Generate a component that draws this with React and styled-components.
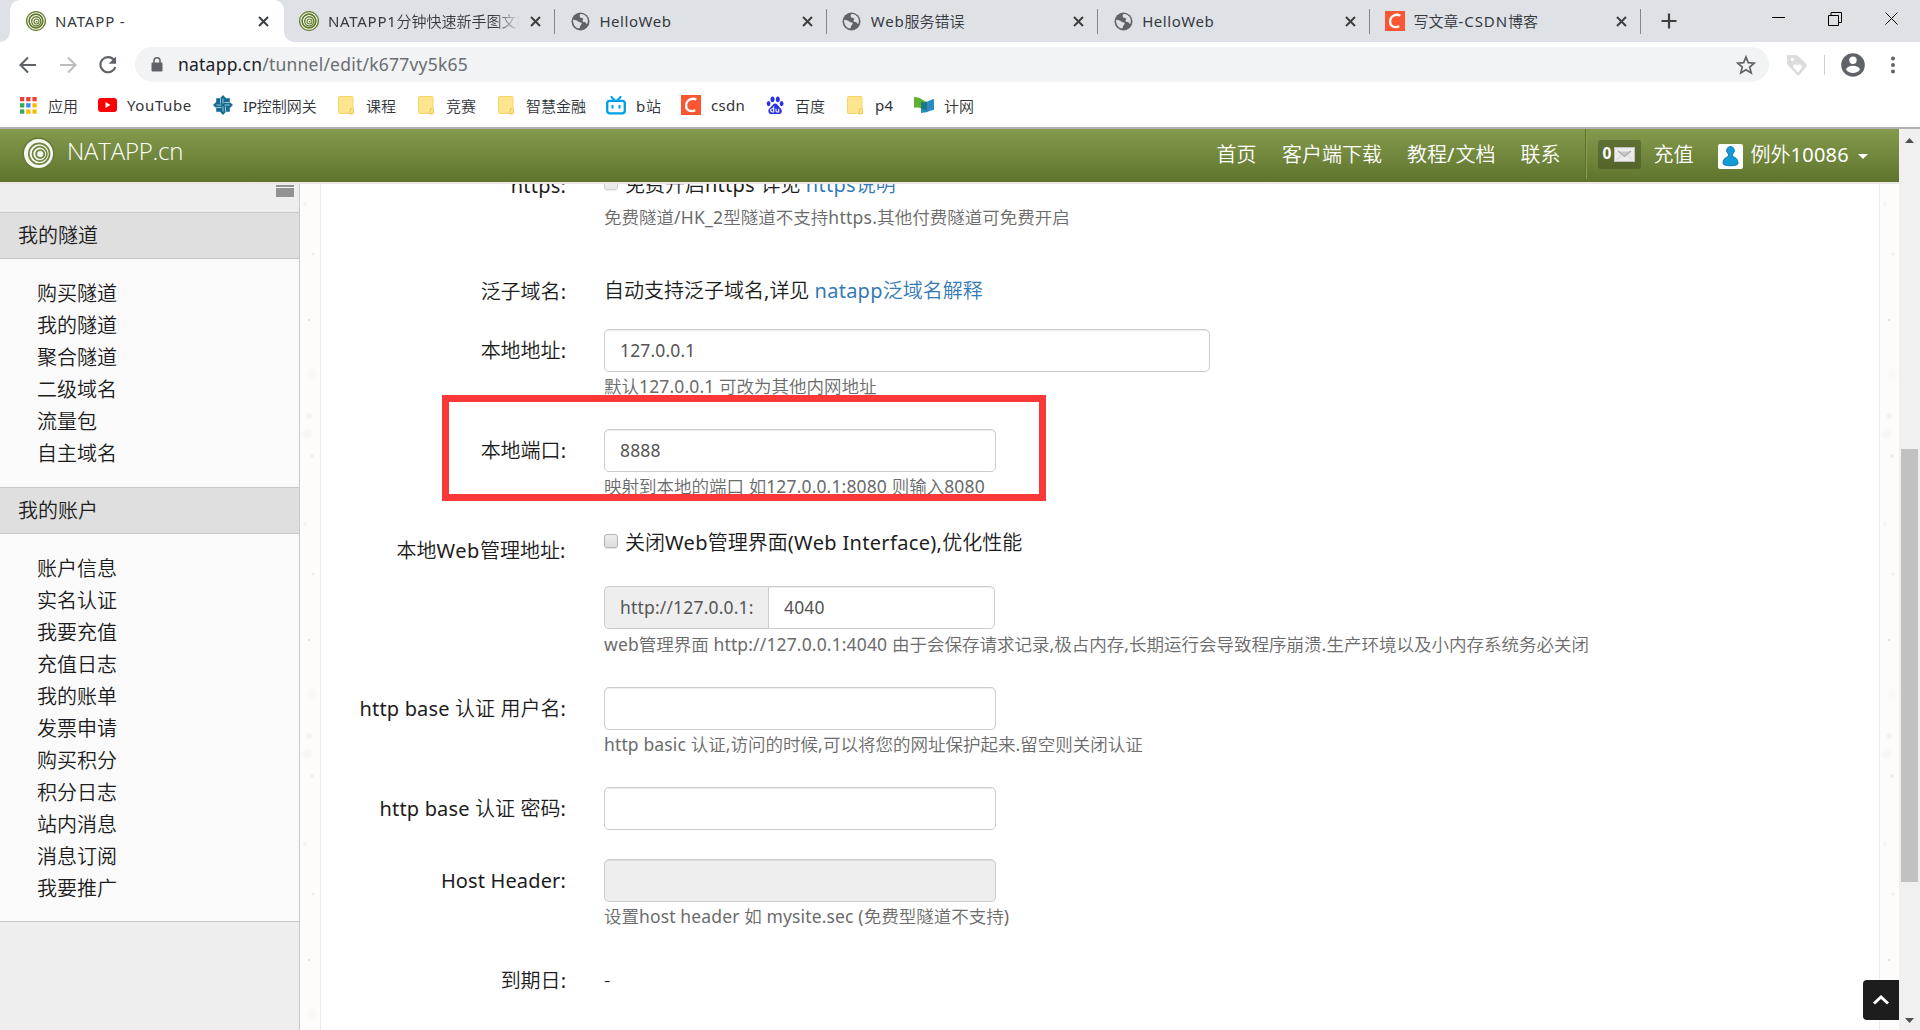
import React from "react";
import styled, { createGlobalStyle, css } from "styled-components";

const Global = createGlobalStyle`
  * { box-sizing: border-box; }
  body { margin: 0; overflow: hidden; background: #fff; }
  input, button { font-family: inherit; }
`;

const uiFont = `"Noto Sans", "Noto Sans CJK SC", sans-serif`;

const Window = styled.div`
  width: 1920px;
  height: 1030px;
  display: flex;
  flex-direction: column;
  overflow: hidden;
  font-family: ${uiFont};
  font-weight: 350;
  color: #1c1c1c;
`;

/* Latin runs keep the regular weight while the Chinese around them is set lighter. */
const Latin = styled.span`
  font-weight: 400;
  letter-spacing: ${(p) => p.$ls || 0}px;
`;

const Mixed = ({ children, ls }) =>
  String(children)
    .split(/([\x20-\x7e]+)/)
    .filter(Boolean)
    .map((run, i) => (/^[\x20-\x7e]/.test(run) ? <Latin key={i} $ls={ls}>{run}</Latin> : run));

/* ---------- tab strip ---------- */
const TabStrip = styled.div`
  height: 42px;
  flex: none;
  display: flex;
  padding-left: 10px;
  background: #dee1e6;
`;

const Tab = styled.div`
  position: relative;
  width: 271.4px;
  height: 42px;
  display: flex;
  align-items: center;
  padding: 0 14px 0 15px;
  font-size: 15px;
  color: #35393d;
  ${(p) =>
    p.$active &&
    css`
      width: 274px;
      padding: 0 15px 0 16px;
      background: #fff;
      border-radius: 10px 10px 0 0;
      &::before,
      &::after {
        content: "";
        position: absolute;
        bottom: 0;
        width: 10px;
        height: 10px;
      }
      &::before {
        left: -10px;
        background: radial-gradient(circle at 0 0, transparent 9.5px, #fff 10px);
      }
      &::after {
        right: -10px;
        background: radial-gradient(circle at 100% 0, transparent 9.5px, #fff 10px);
      }
    `}
  ${(p) =>
    p.$divided &&
    css`
      background: linear-gradient(#84878b, #84878b) right 9px / 1px 25px no-repeat;
    `}
`;

const TabTitle = styled.span`
  flex: 1;
  min-width: 0;
  margin: 0 10px 0 9px;
  white-space: nowrap;
  overflow: hidden;
  line-height: 24px;
  ${(p) =>
    p.$fade &&
    css`
      mask-image: linear-gradient(90deg, #000 86%, transparent 100%);
    `}
`;

const IconBox = styled.span`
  display: flex;
  flex: none;
  align-items: center;
  justify-content: center;
  width: 20px;
  height: 20px;
`;

const NewTab = styled.div`
  width: 56px;
  display: flex;
  align-items: center;
  justify-content: center;
`;

const WindowControls = styled.div`
  margin-left: auto;
  display: flex;
  height: 37px;
  align-items: center;
  gap: 43px;
  padding-right: 22px;
`;

/* ---------- toolbar ---------- */
const Toolbar = styled.div`
  height: 45px;
  flex: none;
  display: flex;
  align-items: center;
  padding: 0 17px 0 17px;
`;

const NavIcons = styled.div`
  display: flex;
  gap: 18px;
  width: 118px;
`;

const Omnibox = styled.div`
  width: 1634px;
  height: 35px;
  border-radius: 18px;
  background: #f1f3f4;
  display: flex;
  align-items: center;
  padding: 0 13px 0 16px;
`;

const Url = styled.span`
  flex: 1;
  margin: 0 0 2px 15px;
  font-size: 17.5px;
  font-weight: 400;
  line-height: 30px;
  color: #6a6d71;
  white-space: pre;
  letter-spacing: 0.22px;
  b {
    font-weight: 400;
    color: #202124;
  }
`;

const ToolbarEnd = styled.div`
  flex: none;
  display: flex;
  align-items: center;
  padding-left: 17px;
`;

const Rule = styled.span`
  width: 1px;
  height: 20px;
  margin: 0 16px 0 16px;
  background: #cdd0d4;
`;

const MenuDots = styled.svg`
  margin-left: 25px;
`;

const Bookmarks = styled.div`
  height: 42px;
  flex: none;
  display: flex;
  padding: 2px 0 0 18px;
  border-bottom: 2px solid #b2b2b6;
`;

const Bookmark = styled.div`
  width: ${(p) => p.$w}px;
  height: 32px;
  flex: none;
  display: flex;
  align-items: center;
  font-size: 15px;
  color: #303438;
  white-space: nowrap;
`;

const BookmarkText = styled.span`
  margin-left: 10px;
`;

/* ---------- page ---------- */
const Page = styled.div`
  flex: 1;
  min-height: 0;
  display: flex;
`;

const Viewport = styled.div`
  position: relative;
  width: 1899px;
  display: flex;
  flex-direction: column;
  overflow: hidden;
`;

const SiteNav = styled.header`
  height: 55px;
  flex: none;
  display: flex;
  align-items: stretch;
  padding: 0 31px 0 22px;
  background: linear-gradient(#849b4d, #5e742d) 0 0 / 100% 53px no-repeat, #e9e9e6;
  color: #fff;
  position: relative;
  z-index: 1;
`;

const Brand = styled.div`
  display: flex;
  align-items: center;
  gap: 12px;
  height: 48px;
  margin-right: auto;
`;

const BrandName = styled.span`
  font-family: "Open Sans", "Noto Sans", sans-serif;
  font-size: 24px;
  font-weight: 300;
  line-height: 32px;
  padding-bottom: 4px;
  letter-spacing: -0.2px;
`;

const NavLink = styled.a`
  height: 53px;
  line-height: 52px;
  font-size: 20px;
  margin-right: ${(p) => p.$mr || 0}px;
  white-space: nowrap;
`;

const NavRule = styled.span`
  width: 2px;
  height: 50px;
  margin: 0 11px 0 0;
  border-left: 1px solid #5d7230;
  border-right: 1px solid #86a044;
`;

const MailBadge = styled.span`
  width: 43px;
  height: 29px;
  margin: 11px 13px 0 0;
  padding-left: 5px;
  display: flex;
  align-items: center;
  gap: 3px;
  border-radius: 3px;
  background: rgba(60, 70, 30, 0.45);
`;

const MailCount = styled.b`
  font-size: 15.5px;
  line-height: 24px;
  padding-bottom: 3px;
`;

const Avatar = styled.span`
  width: 25px;
  height: 25px;
  margin: 15px 8px 0 0;
  border-radius: 2px;
  background: #fff;
  display: flex;
  align-items: center;
  justify-content: center;
`;

const Caret = styled.span`
  margin: 25px 0 0 9px;
  width: 10px;
  height: 5px;
  background: #fff;
  clip-path: polygon(0 0, 100% 0, 50% 100%);
`;

const Body = styled.div`
  flex: 1;
  min-height: 0;
  display: flex;
`;

const Sidebar = styled.aside`
  width: 300px;
  flex: none;
  background: #eee;
  border-right: 1px solid #c8c8c8;
  font-size: 20px;
`;

const SidebarTop = styled.div`
  height: 28px;
  padding: 1px 5px 0 0;
  display: flex;
  justify-content: flex-end;
`;

const Toggle = styled.span`
  width: 18px;
  height: 12px;
  background: linear-gradient(#929292 0 2px, #f4f4f4 2px 3px, #929292 3px);
`;

const GroupTitle = styled.div`
  height: 47px;
  line-height: 46px;
  padding-left: 18px;
  background: #dfdfdf;
  border: solid #c8c8c8;
  border-width: 1px 0;
`;

const GroupList = styled.ul`
  margin: 0;
  padding: 19px 0 ${(p) => p.$pb}px 37px;
  list-style: none;
  background: #fafafa;
  ${(p) => p.$last && "border-bottom: 1px solid #c8c8c8;"}
`;

const GroupItem = styled.li`
  height: 32px;
  line-height: 32px;
`;

const Texture = styled.div`
  width: ${(p) => p.$w}px;
  flex: none;
  background-color: #fdfcfb;
  background-image: radial-gradient(circle at 9px 136px, #dcdcda 0 0.5px, transparent 1.5px),
    radial-gradient(circle at 13px 70px, #efefec 0 1px, transparent 2px),
    radial-gradient(circle at 7px 250px, #f7f6f4 0 2px, transparent 7px),
    radial-gradient(circle at 12px 190px, #f9f8f6 0 2px, transparent 7px),
    radial-gradient(circle at 9px 232px, #f3f2f0 0 1px, transparent 4px),
    radial-gradient(circle at 5px 20px, #f4f3f1 0 1px, transparent 3px),
    radial-gradient(circle at 12px 272px, #ececea 0 1px, transparent 2px);
  background-size: 100% 320px;
`;

const Panel = styled.main`
  flex: 1;
  min-width: 0;
  overflow: hidden;
  background: #fff;
  border: solid #ececea;
  border-width: 0 1px;
`;

const Form = styled.form`
  margin: -20px 0 0 24px;
`;

const Row = styled.div`
  height: ${(p) => p.$h}px;
  display: grid;
  grid-template-columns: 221px 1fr;
  column-gap: 38px;
  white-space: nowrap;
`;

const Label = styled.label`
  text-align: right;
  font-size: 20px;
  line-height: 43px;
`;

const Field = styled.div`
  display: flex;
  flex-direction: column;
  align-items: flex-start;
`;

const Plain = styled.div`
  display: flex;
  font-size: 20px;
  line-height: 42px;
  height: 43px;
  white-space: pre;
`;

const Link = styled.a`
  color: #337ab7;
`;

const CheckLine = styled(Plain)`
  height: 57px;
  line-height: 27px;
`;

const Check = styled.input.attrs({ type: "checkbox" })`
  appearance: none;
  width: 14px;
  height: 14px;
  margin: ${(p) => p.$mt}px 7px 0 0;
  border: 1px solid #b4b4b4;
  border-radius: 3px;
  background: linear-gradient(#eee, #dcdcdc);
  box-shadow: 0 1px 1px rgba(0, 0, 0, 0.12);
  opacity: ${(p) => (p.disabled ? 0.65 : 1)};
`;

const Input = styled.input`
  width: ${(p) => p.$w}px;
  height: 43px;
  padding: 0 15px 2px;
  border: 1px solid #ccc;
  border-radius: 5px;
  box-shadow: inset 0 1px 1px rgba(0, 0, 0, 0.075);
  background: ${(p) => (p.disabled ? "#eee" : "#fff")};
  color: #555;
  font-size: 17.5px;
  letter-spacing: 0.15px;
`;

const InputGroup = styled.div`
  display: flex;
  ${Input} {
    border-radius: 0 5px 5px 0;
  }
`;

const Addon = styled.span`
  width: 164px;
  height: 43px;
  padding-left: 15px;
  line-height: 41px;
  border: 1px solid #ccc;
  border-right: 0;
  border-radius: 5px 0 0 5px;
  background: #eee;
  color: #555;
  font-size: 17.5px;
  font-weight: 400;
  letter-spacing: 0.17px;
`;

const HelpText = styled.span`
  margin-top: ${(p) => p.$mt || 0}px;
  font-size: 17.5px;
  line-height: 28px;
  color: #6b6b6b;
`;

const Help = ({ children, mt, ls = 0.14 }) => (
  <HelpText $mt={mt}><Mixed ls={ls}>{children}</Mixed></HelpText>
);

const Highlight = styled.div`
  position: absolute;
  z-index: 1;
  left: 442px;
  top: 266px;
  width: 604px;
  height: 106px;
  border: 7px solid #fa3838;
`;

const BackToTop = styled.button`
  position: absolute;
  z-index: 2;
  right: 0;
  bottom: 10px;
  width: 36px;
  height: 40px;
  padding: 0;
  border: 0;
  border-radius: 4px 0 0 4px;
  background: #1d1d1d;
  display: flex;
  align-items: center;
  justify-content: center;
`;

const Scrollbar = styled.div`
  width: 21px;
  background: #f0f0f0;
  display: flex;
  flex-direction: column;
  align-items: center;
  padding: 9px 0 7px;
`;

const Thumb = styled.div`
  width: 17px;
  height: 433px;
  margin: 306px 0 auto;
  background: #c1c1c1;
`;

const Arrow = styled.span`
  width: 9px;
  height: 5px;
  background: #505050;
  clip-path: ${(p) => (p.$down ? "polygon(0 0, 100% 0, 50% 100%)" : "polygon(50% 0, 100% 100%, 0 100%)")};
`;

/* ---------- icons ---------- */
const Rings = () => (
  <svg width="20" height="20" viewBox="0 0 32 32">
    <circle cx="16" cy="16" r="15" fill="#fff" stroke="#66802f" strokeWidth="2.200" />
    <g fill="none" stroke="#5f7a2a">
      <circle cx="16" cy="16" r="11" strokeWidth="2.600" />
      <circle cx="16.400" cy="16.400" r="7.300" strokeWidth="2.200" />
      <circle cx="16.800" cy="16.800" r="4" strokeWidth="1.800" />
    </g>
    <circle cx="17" cy="17" r="1.500" fill="#5f7a2a" />
  </svg>
);

const BrandMark = () => (
  <svg width="33" height="33" viewBox="0 0 33 33">
    <circle cx="16.500" cy="16.500" r="16.300" fill="#677d3a" />
    <circle cx="16.500" cy="16.500" r="14.500" fill="#f6f9f2" />
    <g fill="none" stroke="#6f863f">
      <circle cx="17.200" cy="16.700" r="10.400" strokeWidth="1.700" />
      <circle cx="17.700" cy="16.900" r="7.200" strokeWidth="1.700" />
      <circle cx="18.200" cy="17.100" r="4" strokeWidth="1.900" />
    </g>
  </svg>
);

const Globe = () => (
  <svg width="19" height="19" viewBox="0 0 19 19">
    <circle cx="9.5" cy="9.5" r="9" fill="#5f6368" />
    <path d="M2.2 7.6c1.2.2 2 1 3.300 1 1.300 0 1.600 1.200 2.700 1.500 1 .3 2.500.2 2.500 1.500 0 1.400-1.500 1.500-1.700 2.800-.1 1-.3 2-1.300 2.100C4.300 16 1.500 12 2.200 7.600z" fill="#dee1e6" />
    <path d="M9.200 2.200c2.800-.5 6 1.300 7.100 4.100.9 2 .6 4.500-.3 6-.9-.3-.7-1.600-1.700-2-.9-.4-2.300.1-2.700-1-.4-1.200.8-1.700.6-2.600-.2-.8-1.600-.5-2.500-.9-1.200-.5-1.500-2.900-.5-3.600z" fill="#dee1e6" />
  </svg>
);

const Csdn = () => (
  <svg width="20" height="20" viewBox="0 0 20 20">
    <rect width="20" height="20" fill="#fc5531" />
    <path d="M15.300 4.700C11.500 2.500 5.300 4.200 5.100 10.600c-.1 5 4.400 6.600 9.200 4.600" fill="none" stroke="#fff" strokeWidth="2.300" />
  </svg>
);

const CloseX = () => (
  <svg width="11" height="11" viewBox="0 0 11 11">
    <path d="M1 1l9 9M10 1l-9 9" stroke="#3c4043" strokeWidth="2" />
  </svg>
);

const Folder = () => (
  <svg width="16" height="19" viewBox="0 0 16 19">
    <path d="M0.500 1.500a1 1 0 0 1 1-1h12.500a1 1 0 0 1 1 1v16h-13.500a1 1 0 0 1-1-1z" fill="#ffe48f" stroke="#f6d467" />
    <path d="M12.500 12.500h2a1 1 0 0 1 1 1v3.500a1 1 0 0 1-1 1h-2.500z" fill="#ffe48f" stroke="#eec855" />
  </svg>
);

const Apps = () => {
  const colors = ["#ea4335", "#ea4335", "#ea4335", "#34a853", "#4285f4", "#fbbc05", "#34a853", "#fbbc05", "#fbbc05"];
  return (
    <svg width="17" height="17" viewBox="0 0 17 17">
      {colors.map((c, i) => (
        <rect key={i} x={(i % 3) * 6.2} y={Math.floor(i / 3) * 6.2} width="4.300" height="4.300" fill={c} />
      ))}
    </svg>
  );
};

const YouTube = () => (
  <svg width="19" height="14" viewBox="0 0 19 14">
    <rect width="19" height="14" rx="3" fill="#f00" />
    <path d="M7.500 4l5 3-5 3z" fill="#fff" />
  </svg>
);

const IpDiamond = () => (
  <svg width="20" height="20" viewBox="0 0 20 20">
    <path d="M10 0l3 3.200h3.800V7L20 10l-3.200 3v3.800H13L10 20l-3-3.200H3.200V13L0 10l3.200-3V3.200H7z" fill="#156a8f" />
    <path d="M7.500 3.200v5.300M12.500 11.500v5.300M11.500 7.500h5.300M3.200 12.500h5.300M10 3.500v5M10 11.500v5M3.500 10h5M11.500 10h5" stroke="#c4e0ea" strokeWidth="0.800" />
  </svg>
);

const Bili = () => (
  <svg width="20" height="19" viewBox="0 0 20 19" fill="none" stroke="#00a1e4" strokeLinecap="round">
    <rect x="1.200" y="4.800" width="17.600" height="12.500" rx="2.500" strokeWidth="2.300" />
    <path d="M5.500 1l2.800 3M14.500 1l-2.800 3M6.500 9.800v2M13.500 9.800v2" strokeWidth="2.100" />
  </svg>
);

const Baidu = () => (
  <svg width="18" height="19" viewBox="0 0 18 19" fill="#2932e1">
    <ellipse cx="6.500" cy="3.300" rx="2" ry="2.900" />
    <ellipse cx="11.800" cy="3.300" rx="2" ry="2.900" />
    <ellipse cx="2.600" cy="7.600" rx="1.900" ry="2.600" />
    <ellipse cx="15.600" cy="7.600" rx="1.900" ry="2.600" />
    <path d="M9.100 7.400c2 0 2.800 2 4.300 3.500 1.600 1.600 3 3 2.300 5.200-.6 2-2.600 2.300-4.300 2-1.500-.3-3-.3-4.500 0-1.800.3-3.900 0-4.400-2-.6-2.300.9-3.800 2.500-5.300 1.500-1.400 2.200-3.400 4.100-3.400z" />
    <path d="M7.700 10.500v5.500H6.300c-2.200 0-2.200-3.300 0-3.300h1.400M10 12.700v2.300c0 .8.500 1 1.200 1h1.500v-3.300" fill="none" stroke="#fff" strokeWidth="1.100" />
  </svg>
);

const BookFlag = () => (
  <svg width="20" height="16" viewBox="0 0 20 16">
    <path d="M0 0c3 0 5.500.8 8 2.400L13 5v8.500L8 11.800C5.500 10.600 3 10.400 0 10.800z" fill="#62b033" />
    <path d="M7 4.500c2 1.200 3.500 1.200 6 .3 2.200-1 4.500-2.500 7-2.800v11c-2.500 0-5 1-7.500 2.300L7 16z" fill="#2a8cc4" />
    <path d="M7 4.500c2 1.200 3.500 1.200 6 .3v8.700l-6-1.900z" fill="#1c7a80" />
  </svg>
);

const Stroke = ({ children, color = "#5f6368" }) => (
  <svg width="22" height="22" viewBox="0 0 22 22" fill="none" stroke={color} strokeWidth="2.100">
    {children}
  </svg>
);

const tabs = [
  { title: "NATAPP -", icon: <Rings />, active: true, ls: 0.85 },
  { title: "NATAPP1分钟快速新手图文教", icon: <Rings />, fade: true, divided: true, ls: 0.7 },
  { title: "HelloWeb", icon: <Globe />, divided: true, ls: 0.55 },
  { title: "Web服务错误", icon: <Globe />, divided: true, ls: 0.8 },
  { title: "HelloWeb", icon: <Globe />, divided: true, ls: 0.55 },
  { title: "写文章-CSDN博客", icon: <Csdn />, divided: true, ls: 0.9 },
];

const bookmarks = [
  { text: "应用", icon: <Apps />, w: 79 },
  { text: "YouTube", icon: <YouTube />, w: 116, ls: 0.6 },
  { text: "IP控制网关", icon: <IpDiamond />, w: 123, ls: -0.2 },
  { text: "课程", icon: <Folder />, w: 80 },
  { text: "竞赛", icon: <Folder />, w: 80 },
  { text: "智慧金融", icon: <Folder />, w: 110 },
  { text: "b站", icon: <Bili />, w: 75, ls: 0.8 },
  { text: "csdn", icon: <Csdn />, w: 84, ls: 0.3 },
  { text: "百度", icon: <Baidu />, w: 80 },
  { text: "p4", icon: <Folder />, w: 69, ls: 0.3 },
  { text: "计网", icon: <BookFlag />, w: 80 },
];

const tunnelMenu = ["购买隧道", "我的隧道", "聚合隧道", "二级域名", "流量包", "自主域名"];
const accountMenu = [
  "账户信息", "实名认证", "我要充值", "充值日志", "我的账单", "发票申请",
  "购买积分", "积分日志", "站内消息", "消息订阅", "我要推广",
];

export default function App() {
  return (
    <Window>
      <Global />
      <TabStrip>
        {tabs.map((t, i) => (
          <Tab key={i} $active={t.active} $divided={t.divided}>
            <IconBox>{t.icon}</IconBox>
            <TabTitle $fade={t.fade}><Mixed ls={t.ls}>{t.title}</Mixed></TabTitle>
            <CloseX />
          </Tab>
        ))}
        <NewTab>
          <svg width="16" height="16" viewBox="0 0 16 16">
            <path d="M8 0.500v15M0.500 8h15" stroke="#3c4043" strokeWidth="2.200" />
          </svg>
        </NewTab>
        <WindowControls>
          <svg width="13" height="13" viewBox="0 0 13 13"><path d="M0 5.500h13" stroke="#000" /></svg>
          <svg width="14" height="14" viewBox="0 0 14 14" fill="none" stroke="#000">
            <path d="M0.500 3.500h10v10h-10zM3 3.500v-3h10.500v10H10.500" />
          </svg>
          <svg width="13" height="13" viewBox="0 0 13 13"><path d="M0.500 0.500l12 12M12.500 0.500l-12 12" stroke="#000" /></svg>
        </WindowControls>
      </TabStrip>

      <Toolbar>
        <NavIcons>
          <Stroke><path d="M19 11H4M11 3.500L3.500 11l7.500 7.500" /></Stroke>
          <Stroke color="#bbbdbf"><path d="M3 11h15M11 3.500l7.500 7.500-7.500 7.500" /></Stroke>
          <Stroke>
            <path d="M17.200 6.200A7.600 7.600 0 1 0 18.300 13" />
            <path d="M19 2.500v7.300h-7.300z" fill="#5f6368" stroke="none" />
          </Stroke>
        </NavIcons>
        <Omnibox>
          <svg width="12" height="15" viewBox="0 0 12 15">
            <path d="M3 6V3.800a3 3 0 0 1 6 0V6" fill="none" stroke="#5f6368" strokeWidth="1.500" />
            <rect x="0.500" y="5.500" width="11" height="9" rx="1.200" fill="#5f6368" />
          </svg>
          <Url><b>natapp.cn</b>/tunnel/edit/k677vy5k65</Url>
          <svg width="20" height="20" viewBox="0 0 20 20">
            <path d="M10 2l2.300 5.600 6 .5-4.600 3.900 1.500 5.900L10 14.700l-5.200 3.200L6.300 12 1.700 8.100l6-.5z" fill="none" stroke="#5f6368" strokeWidth="1.700" />
          </svg>
        </Omnibox>
        <ToolbarEnd>
          <svg width="22" height="22" viewBox="0 0 22 22">
            <path d="M1 1h8q2 0 3.500 1.500l7.500 7q1.500 1.500.5 3L13.500 21q-1.200 1-2.500 0L1 10z" fill="#dcdcdc" />
            <circle cx="6.500" cy="5.500" r="1.700" fill="#fff" />
            <path d="M12 18.500l-4.500-5c-1.500-2.500 1.500-4.500 3.500-2 2.500-2 6-.5 4.500 2.500z" fill="#fff" />
          </svg>
          <Rule />
          <svg width="24" height="24" viewBox="0 0 24 24">
            <circle cx="12" cy="12" r="11.800" fill="#5f6368" />
            <circle cx="12" cy="7.300" r="3.700" fill="#fff" />
            <path d="M5 16.500c1.500-5 12.500-5 14 0-2.500 4.500-11.500 4.500-14 0z" fill="#fff" />
          </svg>
          <MenuDots width="6" height="18" viewBox="0 0 6 18" fill="#5f6368">
            <circle cx="3" cy="2.500" r="2" />
            <circle cx="3" cy="9" r="2" />
            <circle cx="3" cy="15.500" r="2" />
          </MenuDots>
        </ToolbarEnd>
      </Toolbar>

      <Bookmarks>
        {bookmarks.map((b) => (
          <Bookmark key={b.text} $w={b.w}>
            <IconBox>{b.icon}</IconBox>
            <BookmarkText><Mixed ls={b.ls}>{b.text}</Mixed></BookmarkText>
          </Bookmark>
        ))}
      </Bookmarks>

      <Page>
        <Viewport>
          <SiteNav>
            <Brand>
              <BrandMark />
              <BrandName>NATAPP.cn</BrandName>
            </Brand>
            <NavLink $mr={25.5}>首页</NavLink>
            <NavLink $mr={25}>客户端下载</NavLink>
            <NavLink $mr={25}><Mixed ls={1}>教程/文档</Mixed></NavLink>
            <NavLink $mr={24}>联系</NavLink>
            <NavRule />
            <MailBadge>
              <MailCount>0</MailCount>
              <svg width="21" height="15" viewBox="0 0 21 15">
                <rect x="0.500" y="0.500" width="20" height="14" fill="#ececec" stroke="#c2c2c2" />
                <path d="M4.500 4.500h12l-6 5z" fill="#c9c9c9" />
                <path d="M4 4l6.500 5.500L17 4" fill="none" stroke="#a9a9a9" strokeWidth="1.100" />
                <path d="M2.500 12.500l5-4M18.500 12.500l-5-4" stroke="#d2d2d2" />
              </svg>
            </MailBadge>
            <NavLink $mr={24}>充值</NavLink>
            <Avatar>
              <svg width="17" height="21" viewBox="0 0 17 21">
                <path d="M8.500.5a4 4 0 0 1 2.500 7c-.8.800-.6 2.500.5 3.500 3.500.9 4.500 3.500 4.500 6.500 0 3-15 3-15 0 0-3 1-5.600 4.500-6.500 1.100-1 1.300-2.700.5-3.500a4 4 0 0 1 2.500-7z" fill="#0f9bd7" stroke="#1873a8" />
              </svg>
            </Avatar>
            <NavLink><Mixed ls={0.25}>例外10086</Mixed></NavLink>
            <Caret />
          </SiteNav>
          <Body>
            <Sidebar>
              <SidebarTop><Toggle /></SidebarTop>
              <GroupTitle>我的隧道</GroupTitle>
              <GroupList $pb={17}>
                {tunnelMenu.map((t) => <GroupItem key={t}>{t}</GroupItem>)}
              </GroupList>
              <GroupTitle>我的账户</GroupTitle>
              <GroupList $pb={16} $last>
                {accountMenu.map((t) => <GroupItem key={t}>{t}</GroupItem>)}
              </GroupList>
            </Sidebar>
            <Texture $w={20} />
            <Panel>
              <Form>
                <Row $h={106}>
                  <Label><Mixed ls={0.2}>https:</Mixed></Label>
                  <Field>
                    <Plain>
                      <Check $mt={12} disabled />
                      <Mixed ls={0.25}>免费开启https 详见 </Mixed>
                      <Link><Mixed ls={0.25}>https说明</Mixed></Link>
                    </Plain>
                    <Help mt={-4} ls={0.25}>免费隧道/HK_2型隧道不支持https.其他付费隧道可免费开启</Help>
                  </Field>
                </Row>
                <Row $h={59}>
                  <Label><Mixed>泛子域名:</Mixed></Label>
                  <Field>
                    <Plain>
                      <Mixed>自动支持泛子域名,详见 </Mixed>
                      <Link><Mixed ls={0.25}>natapp泛域名解释</Mixed></Link>
                    </Plain>
                  </Field>
                </Row>
                <Row $h={100}>
                  <Label><Mixed>本地地址:</Mixed></Label>
                  <Field>
                    <Input $w={606} defaultValue="127.0.0.1" />
                    <Help>默认127.0.0.1 可改为其他内网地址</Help>
                  </Field>
                </Row>
                <Row $h={100}>
                  <Label><Mixed>本地端口:</Mixed></Label>
                  <Field>
                    <Input $w={392} defaultValue="8888" />
                    <Help>映射到本地的端口 如127.0.0.1:8080 则输入8080</Help>
                  </Field>
                </Row>
                <Row $h={158}>
                  <Label><Mixed ls={0.6}>本地Web管理地址:</Mixed></Label>
                  <Field>
                    <CheckLine>
                      <Check $mt={5} />
                      <Mixed ls={0.33}>关闭Web管理界面(Web Interface),优化性能</Mixed>
                    </CheckLine>
                    <InputGroup>
                      <Addon>http://127.0.0.1:</Addon>
                      <Input $w={227} defaultValue="4040" />
                    </InputGroup>
                    <Help mt={1}>web管理界面 http://127.0.0.1:4040 由于会保存请求记录,极占内存,长期运行会导致程序崩溃.生产环境以及小内存系统务必关闭</Help>
                  </Field>
                </Row>
                <Row $h={100}>
                  <Label><Mixed ls={0.17}>http base 认证 用户名:</Mixed></Label>
                  <Field>
                    <Input $w={392} />
                    <Help>http basic 认证,访问的时候,可以将您的网址保护起来.留空则关闭认证</Help>
                  </Field>
                </Row>
                <Row $h={72}>
                  <Label><Mixed ls={0.17}>http base 认证 密码:</Mixed></Label>
                  <Field><Input $w={392} /></Field>
                </Row>
                <Row $h={100}>
                  <Label><Mixed ls={0.14}>Host Header:</Mixed></Label>
                  <Field>
                    <Input $w={392} disabled />
                    <Help>设置host header 如 mysite.sec (免费型隧道不支持)</Help>
                  </Field>
                </Row>
                <Row $h={43}>
                  <Label><Mixed>到期日:</Mixed></Label>
                  <Field><Plain>-</Plain></Field>
                </Row>
              </Form>
            </Panel>
            <Texture $w={19} />
          </Body>
          <Highlight />
          <BackToTop>
            <svg width="18" height="12" viewBox="0 0 18 12">
              <path d="M2 9.500L9 3l7 6.500" fill="none" stroke="#fff" strokeWidth="3" />
            </svg>
          </BackToTop>
        </Viewport>
        <Scrollbar>
          <Arrow />
          <Thumb />
          <Arrow $down />
        </Scrollbar>
      </Page>
    </Window>
  );
}
